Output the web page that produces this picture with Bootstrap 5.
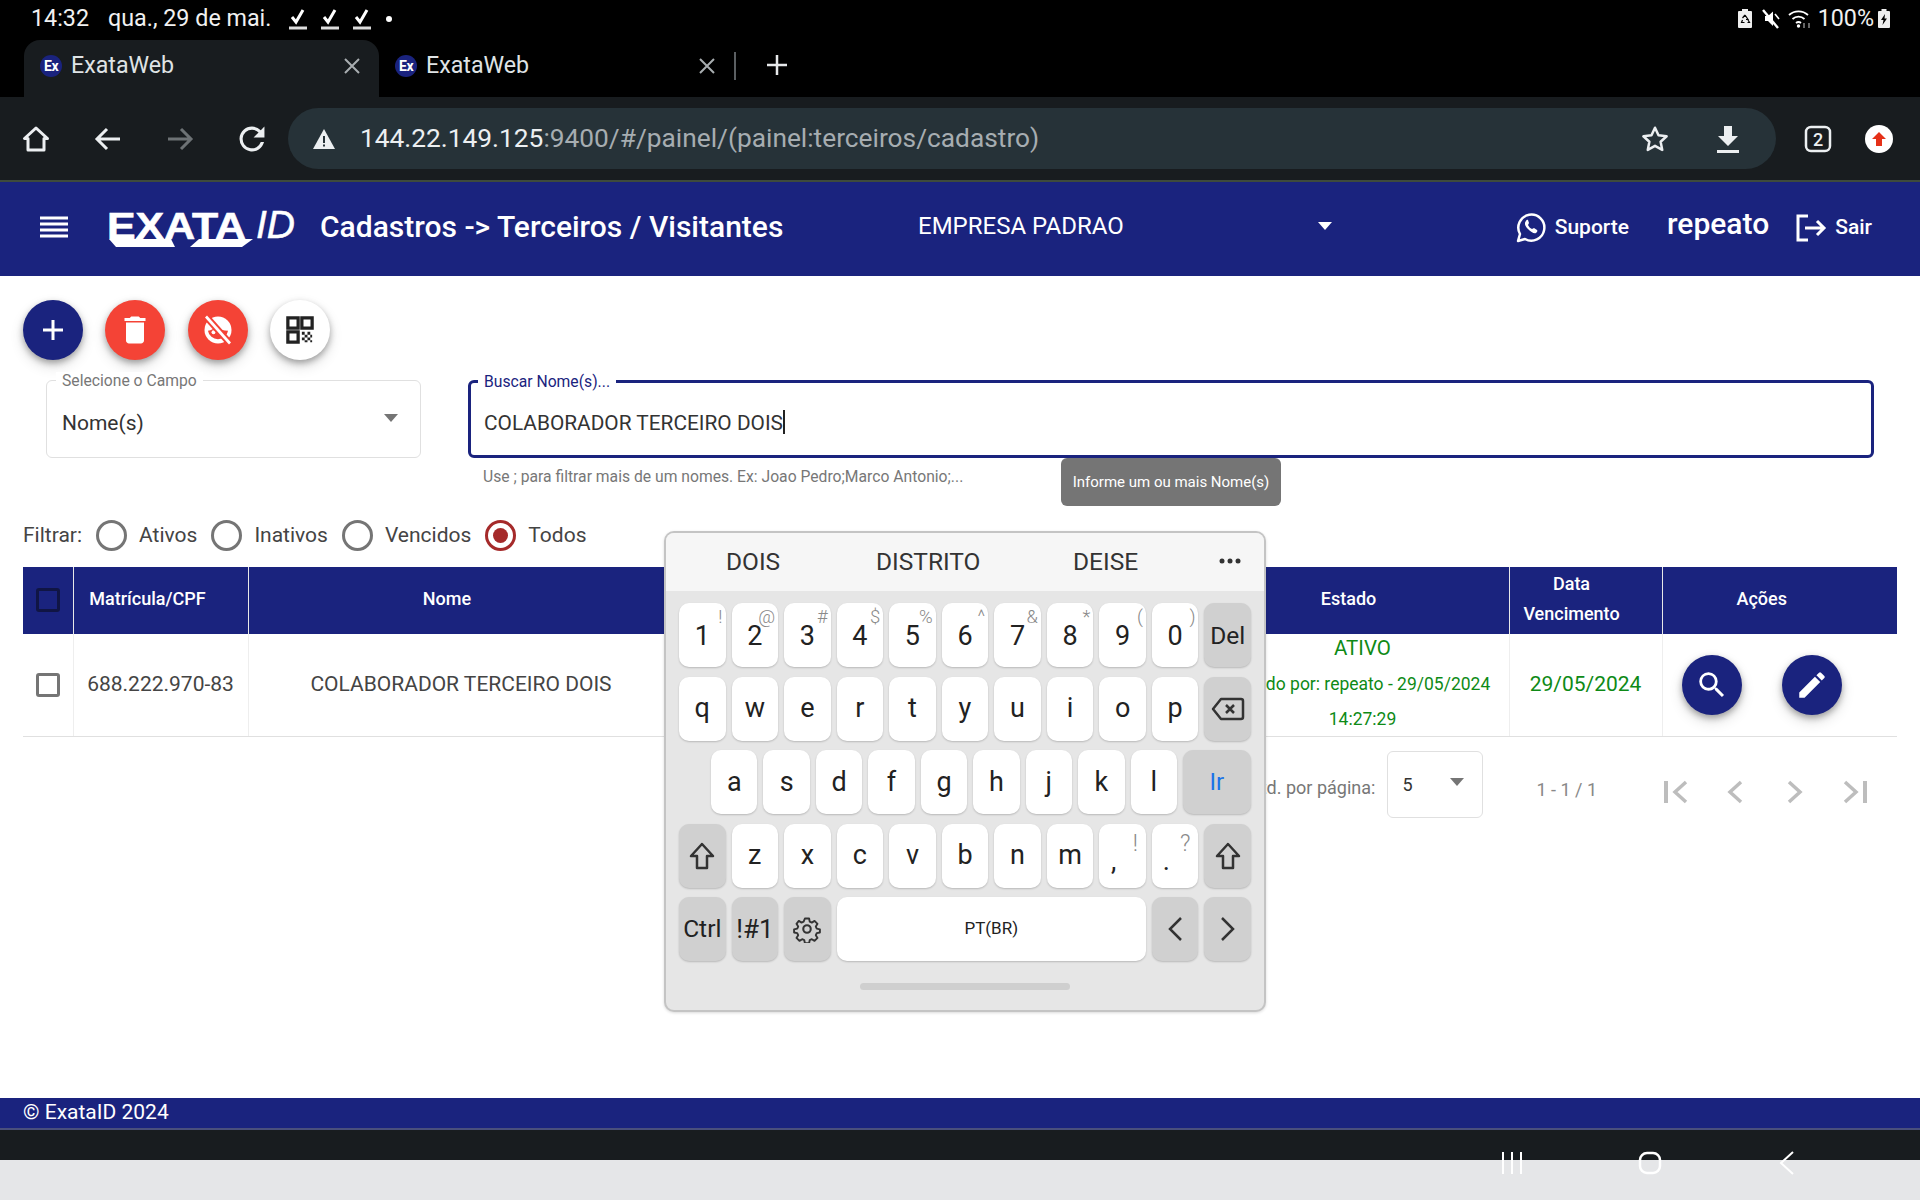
<!DOCTYPE html>
<html lang="pt-BR">
<head>
<meta charset="UTF-8">
<title>ExataWeb</title>
<link href="https://cdn.jsdelivr.net/npm/bootstrap@5.3.0/dist/css/bootstrap.min.css" rel="stylesheet">
<style>
    html, body { height: 1200px; overflow: hidden; }
    body { font-family: Roboto, "Liberation Sans", sans-serif; color: #333; background: #fff; }
    .screen { position: relative; width: 1920px; height: 1200px; overflow: hidden; }
    .ico { display: block; flex: none; }

    .status-bar { height: 37px; margin-bottom: 3px; background: #000; color: #f1f1f1; font-size: 23.3px; padding: 0 30px 0 31px; box-shadow: 0 3px 0 #000; }
    .check-mark { margin-left: 14px; }
    .tab-strip { height: 57px; background: #000; color: #dfe3e5; font-size: 23.2px; padding-left: 24px; }
    .chrome-tab { width: 355px; height: 57px; padding: 0 19px 6px 16px; }
    .chrome-tab.on { background: #181c1f; border-radius: 16px 16px 0 0; }
    .fav { width: 22px; height: 22px; border-radius: 50%; background: #1a237e; color: #fff; font-size: 14px; font-weight: 700; line-height: 22px; text-align: center; margin-right: 9px; letter-spacing: -.5px; }
    .tab-sep { width: 2px; height: 28px; background: #5b5f62; margin: 0 30px 6px 0; }
    .tool-bar { height: 85px; background: #181c1f; border-bottom: 2px solid #3e4a3c; padding: 0 24px 0 22px; }
    .omni { flex: none; width: 1488px; height: 61px; background: #263238; border-radius: 31px; color: #a6adb1; font-size: 26.3px; padding: 0 36px 0 24px; margin-left: 22px; }
    .omni b { font-weight: 400; color: #eceff1; }

    .app-head { height: 94px; background: #1a237e; color: #fff; padding: 0 48px 0 40px; }
    .logo-mark { position: relative; width: 192px; height: 40px; margin-left: 39px; line-height: 1; top: -1px; }
    .logo-word { position: absolute; left: 0; top: 1px; font-family: "Liberation Sans", sans-serif; font-weight: 700; font-size: 36px; transform: scaleX(1.19); transform-origin: left; -webkit-text-stroke: .6px #fff; }
    .logo-id { position: absolute; left: 149px; top: -3px; font-family: "Liberation Sans", sans-serif; font-style: italic; font-size: 39px; -webkit-text-stroke: .5px #fff; }
    .logo-band { position: absolute; left: 0; top: 31px; }
    .page-title { font-size: 30px; font-weight: 500; margin-left: 21px; width: 598px; position: relative; top: -3px; }
    .firm { font-size: 24px; width: 414px; position: relative; top: -3px; }
    .firm .caret-x { border-top-color: #fff; }
    .head-link { font-size: 21px; font-weight: 500; position: relative; top: -1px; }
    .head-user { font-size: 30px; font-weight: 500; margin: 0 26px 0 38px; position: relative; top: -6px; }

    .fab { width: 60px; height: 60px; border-radius: 50%; border: 0; box-shadow: 0 3px 6px rgba(0,0,0,.3), 0 6px 14px rgba(0,0,0,.14); padding: 0; flex: none; }
    .fab-blue { background: #1a237e; }
    .fab-red { background: #f44336; }
    .fab-white { background: #fff; }
    .fab-row { padding: 24px 0 0 23px; gap: 22.4px; }
    .search-row { padding: 20px 46px 0 46px; gap: 47px; }
    .out-field { position: relative; height: 78px; border: 1px solid #e0e0e0; border-radius: 6px; font-size: 21px; padding: 10px 15px 0; color: #333; }
    .out-field.sel { width: 375px; }
    .out-field.act { flex: 1; border: 3px solid #1a237e; padding: 10px 13px 0; font-size: 20.85px; }
    .out-label { position: absolute; top: -9px; left: 9px; background: #fff; padding: 0 6px; font-size: 15.7px; line-height: 18px; color: #777; }
    .act .out-label { color: #1a237e; left: 7px; top: -10px; }
    .caret-x { width: 0; height: 0; border: 7px solid transparent; border-top: 8px solid #757575; border-bottom: 0; }
    .sel .caret-x { margin: 0 7px 12px 0; }
    .text-cursor { display: inline-block; width: 2px; height: 24px; background: #222; vertical-align: -4px; }
    .field-hint { font-size: 15.7px; color: #777; padding: 9px 0 0 483px; line-height: 20px; }
    .tip-box { position: absolute; left: 1061px; top: 458px; width: 220px; height: 48px; background: #757575; color: #fff; border-radius: 6px; font-size: 15px; line-height: 48px; text-align: center; }

    .filter-row { padding: 33px 0 0 23px; font-size: 21px; height: 80px; color: #444; }
    .rad { width: 31px; height: 31px; border: 3px solid #757575; border-radius: 50%; margin: 0 12px 0 0; flex: none; }
    .rad.on { border-color: #a52a2a; padding: 5px; }
    .rad.on::after { content: ""; display: block; width: 15px; height: 15px; border-radius: 50%; background: #a52a2a; }
    .rad-opt { margin-right: 14px; }
    .filter-lead { margin-right: 14px; }

    .grid-wrap { padding: 0 23px; }
    .data-grid { table-layout: fixed; width: 1874px; margin: 0; }
    .data-grid th { height: 67px; background: #1a237e; color: #fff; font-weight: 500; font-size: 18px; line-height: 30px; text-align: center; vertical-align: middle; border-right: 1px solid #e8e8e8; padding: 0 28px 4px 0; }
    .data-grid th:first-child { padding: 0 0 4px; }
    .data-grid th:nth-child(2) { padding: 0 26px 4px 0; }
    .data-grid th:last-child { border-right: 0; padding-right: 36px; }
    .data-grid td { height: 102px; padding: 0; text-align: center; vertical-align: middle; font-size: 21px; color: #444; border-right: 1px solid #eee; border-bottom: 1px solid #e0e0e0; }
    .data-grid td:last-child { border-right: 0; }
    .chk { display: inline-block; width: 24px; height: 24px; border: 3px solid #757575; border-radius: 3px; vertical-align: middle; }
    th .chk { border-color: #101544; }
    .data-grid td.ok-text { color: #0e8a16; }
    .ok-stack { height: 100px; }
    .ok-stack span { display: block; line-height: 35.5px; }
    .ok-stack .big { margin-top: -7px; font-size: 20.5px; }
    .ok-stack .fine { font-size: 17.5px; white-space: nowrap; }
    .row-actions { gap: 40px; padding-left: 19px; }

    .pager { height: 96px; padding-right: 51px; color: #777; font-size: 18px; }
    .pager-lead { margin-top: 6px; }
    .pager-sel { width: 96px; height: 67px; border: 1px solid #e0e0e0; border-radius: 6px; font-size: 18px; color: #333; padding: 0 14px; margin: 0 0 0 12px; }
    .pager-sel .caret-x { margin: 0 4px 6px 0; }
    .pager-count { margin: 10px 65px 0 53px; font-size: 18px; color: #888; }
    .pager-ico { margin-top: 14px; }

    .foot-bar { position: absolute; left: 0; top: 1098px; width: 1920px; height: 32px; background: #1a237e; border-bottom: 2px solid #4a4f7c; color: #fff; font-size: 21px; line-height: 28px; padding-left: 23px; }
    .nav-dark { position: absolute; left: 0; top: 1130px; width: 1920px; height: 30px; background: #181c1f; }
    .nav-light { position: absolute; left: 0; top: 1160px; width: 1920px; height: 40px; background: #e5e6e8; }
    .nav-icons { position: absolute; left: 0; top: 1150px; width: 1920px; height: 26px; }
    .nav-icons svg { position: absolute; top: 0; }

    .soft-kb { position: absolute; left: 664px; top: 531px; width: 602px; height: 481px; background: #e6e6e6; border: 2px solid #c4c4c4; border-radius: 10px; box-shadow: 0 1px 3px rgba(0,0,0,.15); overflow: hidden; }
    .kb-sug { height: 58px; background: #f6f6f6; font-size: 24.5px; color: #333; position: relative; }
    .kb-sug span { position: absolute; top: 14px; line-height: 30px; }
    .kb-row { display: flex; gap: 6px; padding: 0 13px; margin-top: 9.5px; height: 64px; }
    .kb-first { margin-top: 12px; }
    .kb-first .key-k { padding-top: 2px; }
    .kb-pad { padding-left: 45px; }
    .key-k { position: relative; flex: 1 1 0; min-width: 0; background: #fff; border-radius: 10px; box-shadow: 0 1px 2px rgba(0,0,0,.2); font-size: 27px; color: #222; display: flex; align-items: center; justify-content: center; }
    .key-k.fn { background: #d0d0d0; }
    .key-k sup { position: absolute; right: 3px; top: 5px; font-size: 18.5px; font-weight: 300; color: #8a8a8a; line-height: 1; }
    .key-k.key-punct sup { top: 8px; right: 8px; font-size: 23px; }
    .punct-mark { position: relative; left: -9px; top: 6px; }
    .key-ir { flex: 0 0 68px; color: #1a73e8; font-size: 24px; }
    .key-sp { flex: 0 0 309px; font-size: 17px; }
    .key-fn { font-size: 24.5px; }
    .key-sym { font-size: 26px; }
    .kb-grab { width: 210px; height: 7px; background: #cfcfcf; border-radius: 4px; margin: 22px auto 0; }
</style>
</head>
<body>
<div class="screen">

    <div class="status-bar d-flex align-items-center">
        <span>14:32</span>
        <span style="margin:0 18px 0 19px">qua., 29 de mai.</span>
        <svg class="ico" width="18" height="24" viewBox="0 0 18 24"><path d="M3 10l4 5L14 3" fill="none" stroke="#fff" stroke-width="3"/><path d="M0 21h18" stroke="#ddd" stroke-width="3"/></svg>
        <svg class="ico check-mark" width="18" height="24" viewBox="0 0 18 24"><path d="M3 10l4 5L14 3" fill="none" stroke="#fff" stroke-width="3"/><path d="M0 21h18" stroke="#ddd" stroke-width="3"/></svg>
        <svg class="ico check-mark" width="18" height="24" viewBox="0 0 18 24"><path d="M3 10l4 5L14 3" fill="none" stroke="#fff" stroke-width="3"/><path d="M0 21h18" stroke="#ddd" stroke-width="3"/></svg>
        <svg class="ico" style="margin-left:14px" width="8" height="8" viewBox="0 0 8 8"><circle cx="4" cy="4" r="3" fill="#fff"/></svg>
        <svg class="ico ms-auto" width="14" height="19" viewBox="0 0 14 19"><path d="M4 0h6v2h3a1 1 0 0 1 1 1v15a1 1 0 0 1-1 1H1a1 1 0 0 1-1-1V3a1 1 0 0 1 1-1h3z" fill="#eee"/><path d="M7 6l3 4.500H8M4.500 11l-1 2.500h3M9.500 13.500h2L10 11M7 6L4.500 9" fill="none" stroke="#000" stroke-width="1.200"/></svg>
        <svg class="ico" style="margin-left:10px" width="18" height="20" viewBox="0 0 18 20"><path d="M1 7v5h3l5 5V2.500L4 7z" fill="#fff" transform="translate(2 0)"/><path d="M1 1l15 18" stroke="#fff" stroke-width="2.400"/><path d="M13 5l4 5" stroke="#fff" stroke-width="1.600"/></svg>
        <svg class="ico" style="margin-left:8px" width="24" height="22" viewBox="0 0 24 22"><g fill="none" stroke="#fff" stroke-width="1.800"><path d="M1 7a14 14 0 0 1 19 0"/><path d="M4.500 11a9 9 0 0 1 12 0"/><path d="M8 15a4 4 0 0 1 5 0"/></g><circle cx="10.500" cy="18" r="1.700" fill="#fff"/><path d="M16 15v5M21 15v5" stroke="#888" stroke-width="1.500"/></svg>
        <span style="margin-left:6px">100%</span>
        <svg class="ico" style="margin-left:4px" width="12" height="19" viewBox="0 0 12 19"><path d="M3.500 0h5v2H11a1 1 0 0 1 1 1v15a1 1 0 0 1-1 1H1a1 1 0 0 1-1-1V3a1 1 0 0 1 1-1h2.500z" fill="#eee"/><path d="M7 5L3 11h2.500l-1 5L9 9.500H6.500z" fill="#000"/></svg>
    </div>

    <div class="tab-strip d-flex align-items-center">
        <div class="chrome-tab on d-flex align-items-center">
            <span class="fav">Ex</span><span>ExataWeb</span>
            <svg class="ico ms-auto" width="16" height="16" viewBox="0 0 16 16"><path d="M1 1l14 14M15 1L1 15" stroke="#a8adb0" stroke-width="2"/></svg>
        </div>
        <div class="chrome-tab d-flex align-items-center">
            <span class="fav">Ex</span><span>ExataWeb</span>
            <svg class="ico ms-auto" width="16" height="16" viewBox="0 0 16 16"><path d="M1 1l14 14M15 1L1 15" stroke="#a8adb0" stroke-width="2"/></svg>
        </div>
        <div class="tab-sep"></div>
        <svg class="ico mb-2" width="22" height="22" viewBox="0 0 22 22"><path d="M11 1v20M1 11h20" stroke="#e6e8ea" stroke-width="2.500"/></svg>
    </div>

    <div class="tool-bar d-flex align-items-center">
        <svg class="ico" width="28" height="28" viewBox="0 0 28 28"><path d="M14 3L2.500 13.500H6V25h16V13.500h3.500z" fill="none" stroke="#eceff1" stroke-width="3" stroke-linejoin="round"/></svg>
        <svg class="ico" style="margin-left:44px" width="28" height="28" viewBox="0 0 28 28"><path d="M26 14H4M13 4L3 14l10 10" fill="none" stroke="#eceff1" stroke-width="3"/></svg>
        <svg class="ico" style="margin-left:44px" width="28" height="28" viewBox="0 0 28 28"><path d="M2 14h22M15 4l10 10-10 10" fill="none" stroke="#6d7275" stroke-width="3"/></svg>
        <svg class="ico" style="margin-left:44px" width="28" height="28" viewBox="3 3 18 18"><path d="M17.650 6.350A7.958 7.958 0 0 0 12 4a8 8 0 1 0 7.730 10h-2.080A6 6 0 1 1 12 6c1.660 0 3.140.69 4.220 1.780L13 11h7V4z" fill="#eceff1"/></svg>
        <div class="omni d-flex align-items-center">
            <svg class="ico me-3" width="24" height="22" viewBox="0 0 24 22"><path d="M12 1L1 21h22z" fill="#eceff1"/><path d="M11 8h2v7h-2zM11 16.500h2v2h-2z" fill="#263238"/></svg>
            <span class="ms-2"><b>144.22.149.125</b>:9400/#/painel/(painel:terceiros/cadastro)</span>
            <svg class="ico ms-auto" width="30" height="30" viewBox="0 0 24 24"><path d="M12 3l2.800 6 6.500.8-4.800 4.400 1.300 6.500L12 17.500l-5.800 3.200 1.300-6.500-4.800-4.400L9.200 9z" fill="none" stroke="#eceff1" stroke-width="2" stroke-linejoin="round"/></svg>
            <svg class="ico" style="margin-left:46px" width="24" height="28" viewBox="0 0 24 28"><path d="M8 1h8v10h6L12 21 2 11h6zM1 25h22v3H1z" fill="#eceff1"/></svg>
        </div>
        <svg class="ico" style="margin-left:28px" width="28" height="28" viewBox="0 0 28 28"><rect x="2" y="2" width="24" height="24" rx="5" fill="none" stroke="#eceff1" stroke-width="2.500"/><text x="14" y="20.500" text-anchor="middle" font-family="Roboto" font-size="18" font-weight="500" fill="#eceff1">2</text></svg>
        <svg class="ico" style="margin-left:33px" width="28" height="28" viewBox="0 0 28 28"><circle cx="14" cy="14" r="14" fill="#fff"/><path d="M14 7l7 7h-4v7h-6v-7H7z" fill="#e53018"/></svg>
    </div>

    <div class="app-head d-flex align-items-center">
        <svg class="ico mb-1" width="28" height="22" viewBox="0 0 28 22"><path d="M0 2h28M0 8h28M0 14h28M0 20h28" stroke="#fff" stroke-width="3"/></svg>
        <div class="logo-mark">
            <span class="logo-word">EXATA</span><span class="logo-id">ID</span>
            <svg class="logo-band" width="146" height="8" viewBox="0 0 146 8"><path d="M2 0H64L68 8H9zM92 0H146L135 8H83z" fill="#fff"/></svg>
        </div>
        <div class="page-title">Cadastros -&gt; Terceiros / Visitantes</div>
        <div class="firm d-flex align-items-center">
            <span>EMPRESA PADRAO</span>
            <span class="caret-x ms-auto"></span>
        </div>
        <div class="head-link d-flex align-items-center ms-auto">
            <svg class="ico me-2" width="32" height="32" viewBox="0 0 32 32"><path d="M3 29l2-7a13 13 0 1 1 5 5z" fill="none" stroke="#fff" stroke-width="2.500" stroke-linejoin="round"/><path d="M11 9c-2 2-1 5 2 8s6 5 8 4c1-1 2-2 1-3l-3-2-2 1c-2-1-3-2-4-4l1-2-1-3c-1-.5-1.500 0-2 1z" fill="#fff"/></svg>
            <span>Suporte</span>
        </div>
        <span class="head-user">repeato</span>
        <div class="head-link d-flex align-items-center">
            <svg class="ico me-2" width="32" height="30" viewBox="0 0 32 30"><path d="M13 3H3v24h10" fill="none" stroke="#fff" stroke-width="3"/><path d="M10 15h19M22 8l7 7-7 7" fill="none" stroke="#fff" stroke-width="3"/></svg>
            <span>Sair</span>
        </div>
    </div>

    <div class="fab-row d-flex">
        <button class="fab fab-blue d-flex align-items-center justify-content-center"><svg width="24" height="24" viewBox="0 0 24 24"><path d="M12 2v20M2 12h20" stroke="#fff" stroke-width="3"/></svg></button>
        <button class="fab fab-red d-flex align-items-center justify-content-center"><svg width="36" height="36" viewBox="0 0 24 24"><path d="M6 19c0 1.100.9 2 2 2h8c1.100 0 2-.9 2-2V7H6v12zM19 4h-3.500l-1-1h-5l-1 1H5v2h14V4z" fill="#fff"/></svg></button>
        <button class="fab fab-red d-flex align-items-center justify-content-center"><svg width="36" height="36" viewBox="0 0 24 24"><circle cx="12" cy="12" r="9" fill="#fff"/><path d="M5.300 12.500a6.800 6.800 0 0 0 13.400 0c-3 0-6-1-8-3-1.200 1.600-3.200 2.800-5.400 3z" fill="#f44336"/><circle cx="9" cy="13.500" r="1.300" fill="#fff"/><path d="M4 3l16 18" stroke="#f44336" stroke-width="4.500"/><path d="M4 3l16 18" stroke="#fff" stroke-width="1.800"/></svg></button>
        <button class="fab fab-white d-flex align-items-center justify-content-center"><svg width="28" height="28" viewBox="0 0 30 30"><path d="M2 2h11v11H2zM17 2h11v11H17zM2 17h11v11H2z" fill="none" stroke="#222" stroke-width="3.500"/><path d="M17 17h3v3h-3zM23 17h3v3h-3zM20 20h3v3h-3zM26 20h2v3h-2zM17 23h3v3h-3zM23 23h3v3h-3zM20 26h3v2h-3zM26 26h2v2h-2z" fill="#222"/></svg></button>
    </div>

    <div class="search-row d-flex">
        <div class="out-field sel d-flex align-items-center">
            <span class="out-label">Selecione o Campo</span>
            <span>Nome(s)</span>
            <span class="caret-x ms-auto"></span>
        </div>
        <div class="out-field act d-flex align-items-center">
            <span class="out-label">Buscar Nome(s)...</span>
            <span>COLABORADOR TERCEIRO DOIS<span class="text-cursor"></span></span>
        </div>
    </div>
    <div class="field-hint">Use ; para filtrar mais de um nomes. Ex: Joao Pedro;Marco Antonio;...</div>
    <div class="tip-box">Informe um ou mais Nome(s)</div>

    <div class="filter-row d-flex align-items-start">
        <span class="filter-lead">Filtrar:</span>
        <div class="rad-opt d-flex align-items-center"><span class="rad"></span><span>Ativos</span></div>
        <div class="rad-opt d-flex align-items-center"><span class="rad"></span><span>Inativos</span></div>
        <div class="rad-opt d-flex align-items-center"><span class="rad"></span><span>Vencidos</span></div>
        <div class="rad-opt d-flex align-items-center"><span class="rad on"></span><span>Todos</span></div>
    </div>

    <div class="grid-wrap">
        <table class="data-grid">
            <colgroup>
                <col style="width:50px"><col style="width:175px"><col style="width:426px"><col style="width:542px"><col style="width:293px"><col style="width:153px"><col style="width:235px">
            </colgroup>
            <thead>
                <tr>
                    <th><span class="chk"></span></th>
                    <th>Matrícula/CPF</th>
                    <th>Nome</th>
                    <th></th>
                    <th>Estado</th>
                    <th>Data<br>Vencimento</th>
                    <th>Ações</th>
                </tr>
            </thead>
            <tbody>
                <tr>
                    <td><span class="chk"></span></td>
                    <td>688.222.970-83</td>
                    <td>COLABORADOR TERCEIRO DOIS</td>
                    <td></td>
                    <td class="ok-text"><div class="ok-stack"><span class="big">ATIVO</span><span class="fine">Criado por: repeato - 29/05/2024</span><span class="fine">14:27:29</span></div></td>
                    <td class="ok-text">29/05/2024</td>
                    <td>
                        <div class="row-actions d-flex">
                            <button class="fab fab-blue d-flex align-items-center justify-content-center"><svg width="34" height="34" viewBox="0 0 24 24"><path d="M15.500 14h-.79l-.28-.27A6.470 6.470 0 0 0 16 9.500 6.500 6.500 0 1 0 9.500 16c1.610 0 3.090-.59 4.230-1.570l.27.28v.79l5 4.990L20.490 19l-4.990-5zm-6 0C7.010 14 5 11.990 5 9.500S7.010 5 9.500 5 14 7.010 14 9.500 11.990 14 9.500 14z" fill="#fff"/></svg></button>
                            <button class="fab fab-blue d-flex align-items-center justify-content-center"><svg width="34" height="34" viewBox="0 0 24 24"><path d="M3 17.250V21h3.750L17.810 9.940l-3.750-3.750L3 17.250zM20.710 7.040a1 1 0 0 0 0-1.410l-2.340-2.340a1 1 0 0 0-1.410 0l-1.830 1.830 3.750 3.750 1.830-1.830z" fill="#fff"/></svg></button>
                        </div>
                    </td>
                </tr>
            </tbody>
        </table>
    </div>

    <div class="pager d-flex align-items-center justify-content-end">
        <span class="pager-lead">Qtd. por página:</span>
        <div class="pager-sel d-flex align-items-center"><span>5</span><span class="caret-x ms-auto"></span></div>
        <span class="pager-count">1 - 1 / 1</span>
        <svg class="ico pager-ico" width="28" height="28" viewBox="0 0 28 28"><path d="M4 3v22" stroke="#bdbdbd" stroke-width="4"/><path d="M24 4L13 14l11 10" fill="none" stroke="#bdbdbd" stroke-width="3.500"/></svg>
        <svg class="ico pager-ico" style="margin-left:35px" width="20" height="28" viewBox="0 0 20 28"><path d="M16 4L5 14l11 10" fill="none" stroke="#bdbdbd" stroke-width="3.500"/></svg>
        <svg class="ico pager-ico" style="margin-left:40px" width="20" height="28" viewBox="0 0 20 28"><path d="M4 4l11 10L4 24" fill="none" stroke="#bdbdbd" stroke-width="3.500"/></svg>
        <svg class="ico pager-ico" style="margin-left:36px" width="28" height="28" viewBox="0 0 28 28"><path d="M24 3v22" stroke="#bdbdbd" stroke-width="4"/><path d="M4 4l11 10L4 24" fill="none" stroke="#bdbdbd" stroke-width="3.500"/></svg>
    </div>

    <div class="foot-bar">© ExataID 2024</div>
    <div class="nav-dark"></div>
    <div class="nav-light"></div>
    <div class="nav-icons">
        <svg style="left:1500px" width="24" height="26" viewBox="0 0 24 26"><path d="M3 2v22M12 2v22M21 2v22" stroke="#fff" stroke-width="2"/></svg>
        <svg style="left:1637px" width="26" height="26" viewBox="0 0 26 26"><rect x="3" y="3" width="20" height="20" rx="7" fill="none" stroke="#fff" stroke-width="2.500"/></svg>
        <svg style="left:1776px" width="22" height="26" viewBox="0 0 22 26"><path d="M17 2L5 13l12 11" fill="none" stroke="#fff" stroke-width="2"/></svg>
    </div>

    <div class="soft-kb">
        <div class="kb-sug">
            <span style="left:60px">DOIS</span>
            <span style="left:210px">DISTRITO</span>
            <span style="left:407px">DEISE</span>
            <svg style="position:absolute;left:553px;top:24px" width="24" height="8" viewBox="0 0 24 8"><circle cx="3" cy="4" r="2.500" fill="#333"/><circle cx="11" cy="4" r="2.500" fill="#333"/><circle cx="19" cy="4" r="2.500" fill="#333"/></svg>
        </div>
        <div class="kb-row kb-first">
            <div class="key-k">1<sup>!</sup></div><div class="key-k">2<sup>@</sup></div><div class="key-k">3<sup>#</sup></div><div class="key-k">4<sup>$</sup></div><div class="key-k">5<sup>%</sup></div><div class="key-k">6<sup>^</sup></div><div class="key-k">7<sup>&amp;</sup></div><div class="key-k">8<sup>*</sup></div><div class="key-k">9<sup>(</sup></div><div class="key-k">0<sup>)</sup></div><div class="key-k fn key-fn">Del</div>
        </div>
        <div class="kb-row">
            <div class="key-k">q</div><div class="key-k">w</div><div class="key-k">e</div><div class="key-k">r</div><div class="key-k">t</div><div class="key-k">y</div><div class="key-k">u</div><div class="key-k">i</div><div class="key-k">o</div><div class="key-k">p</div>
            <div class="key-k fn"><svg width="34" height="24" viewBox="0 0 34 24"><path d="M10 2h20a2 2 0 0 1 2 2v16a2 2 0 0 1-2 2H10L2 12z" fill="none" stroke="#333" stroke-width="2.500" stroke-linejoin="round"/><path d="M15 8l8 8M23 8l-8 8" stroke="#333" stroke-width="2.500"/></svg></div>
        </div>
        <div class="kb-row kb-pad">
            <div class="key-k">a</div><div class="key-k">s</div><div class="key-k">d</div><div class="key-k">f</div><div class="key-k">g</div><div class="key-k">h</div><div class="key-k">j</div><div class="key-k">k</div><div class="key-k">l</div>
            <div class="key-k fn key-ir">Ir</div>
        </div>
        <div class="kb-row">
            <div class="key-k fn"><svg width="26" height="28" viewBox="0 0 26 28"><path d="M13 2L2 14h6v12h10V14h6z" fill="none" stroke="#333" stroke-width="2.500" stroke-linejoin="round"/></svg></div>
            <div class="key-k">z</div><div class="key-k">x</div><div class="key-k">c</div><div class="key-k">v</div><div class="key-k">b</div><div class="key-k">n</div><div class="key-k">m</div><div class="key-k key-punct"><span class="punct-mark">,</span><sup>!</sup></div><div class="key-k key-punct"><span class="punct-mark">.</span><sup>?</sup></div>
            <div class="key-k fn"><svg width="26" height="28" viewBox="0 0 26 28"><path d="M13 2L2 14h6v12h10V14h6z" fill="none" stroke="#333" stroke-width="2.500" stroke-linejoin="round"/></svg></div>
        </div>
        <div class="kb-row">
            <div class="key-k fn key-fn">Ctrl</div>
            <div class="key-k fn key-sym">!#1</div>
            <div class="key-k fn"><svg width="28" height="28" viewBox="0 0 24 24"><path d="M10 2h4l.6 3 2 .9 2.600-1.600 2.800 2.800-1.600 2.600.9 2 3 .6v3l-3 .6-.9 2 1.600 2.600-2.800 2.800-2.600-1.600-2 .9-.6 3h-4l-.6-3-2-.9-2.600 1.600-2.800-2.800 1.600-2.600-.9-2-3-.6v-3l3-.6.9-2-1.600-2.600L4.200 4.300l2.600 1.600 2-.9z" transform="translate(1.200 1.200) scale(.9)" fill="none" stroke="#333" stroke-width="1.800" stroke-linejoin="round"/><circle cx="12" cy="12" r="3.200" fill="none" stroke="#333" stroke-width="1.800"/></svg></div>
            <div class="key-k key-sp">PT(BR)</div>
            <div class="key-k fn"><svg width="16" height="26" viewBox="0 0 16 26"><path d="M14 2L3 13l11 11" fill="none" stroke="#333" stroke-width="2.500"/></svg></div>
            <div class="key-k fn"><svg width="16" height="26" viewBox="0 0 16 26"><path d="M2 2l11 11L2 24" fill="none" stroke="#333" stroke-width="2.500"/></svg></div>
        </div>
        <div class="kb-grab"></div>
    </div>

</div>
<script src="https://cdn.jsdelivr.net/npm/bootstrap@5.3.0/dist/js/bootstrap.bundle.min.js"></script>
</body>
</html>
